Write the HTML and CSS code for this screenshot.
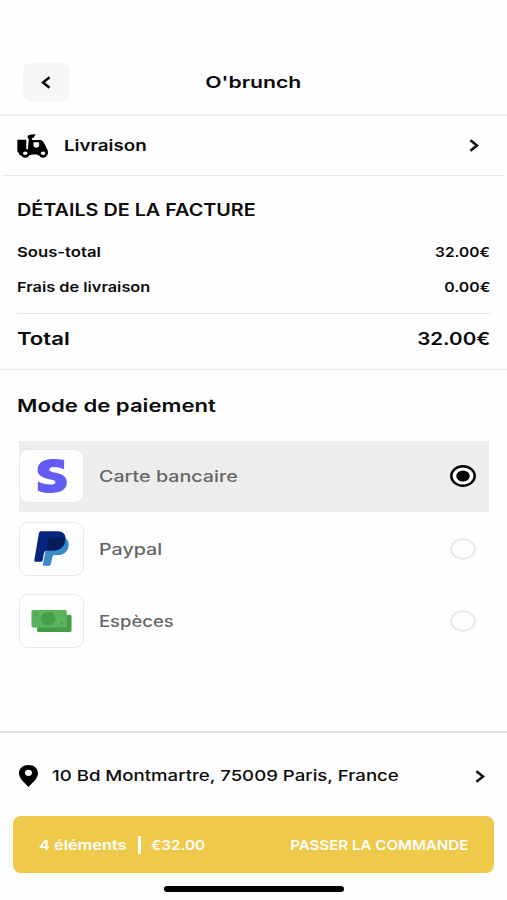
FILE: index.html
```html
<!DOCTYPE html>
<html lang="fr">
<head>
<meta charset="utf-8">
<title>O'brunch</title>
<link rel="stylesheet" href="styles.css">
</head>
<body>
<main class="screen">
  <header class="header">
    <button class="back" aria-label="Retour">
      <svg class="chevron" viewBox="0 0 10 13"><path d="M8.6 1.2 2 6.5l6.6 5.3"/></svg>
    </button>
    <h1 class="title"><span class="wide w-title">O'brunch</span></h1>
  </header>

  <section class="delivery">
    <svg class="truck" viewBox="0 0 94 72">
      <path d="M1 17h27v36h5l2-34h3q-4-1-3-6-4-2-3-7 3-5 12-5l12-1q-1 7-7 11l-5 3 3 4h24q7 0 11 9l9 18q3 4 3 10 0 7-5 9H8q-2-7-7-12z"/>
      <path class="hole" d="M50 25h17v12q-4 4-9 4-7-1-8-6z"/>
      <circle cx="25" cy="58" r="13.5"/><ellipse class="hole" cx="25" cy="58" rx="6.5" ry="5.5"/>
      <circle cx="79" cy="58" r="13.5"/><ellipse class="hole" cx="79" cy="58" rx="6.5" ry="5.5"/>
      <path class="hole" d="M40 66l4-4h17l3 4v6H40z"/>
    </svg>
    <span class="delivery-name"><span class="wide w-delivery">Livraison</span></span>
    <svg class="chevron" viewBox="0 0 10 13"><path d="M1.4 1.2 8 6.5l-6.6 5.3"/></svg>
  </section>

  <section class="bill">
    <h2 class="bill-title"><span class="wide w-bill">DÉTAILS DE LA FACTURE</span></h2>
    <div class="line"><span class="wide w-sub">Sous-total</span><span class="wide end w-sub-price">32.00€</span></div>
    <div class="line"><span class="wide w-fee">Frais de livraison</span><span class="wide end w-fee-price">0.00€</span></div>
    <div class="total"><span class="wide w-total">Total</span><span class="wide end w-total-price">32.00€</span></div>
  </section>

  <section class="payment">
    <h2 class="payment-title"><span class="wide w-payment">Mode de paiement</span></h2>
    <div class="option selected">
      <span class="tile">
        <svg class="stripe" viewBox="0 0 88 101"><path fill="#635bf5" d="M80 3V31C69 26 60 24 50 24c-10 0-14 3-14 7 0 6 8 7 20 10 22 5 32 13 32 28 0 21-18 32-48 32-15 0-28-3-38-7V67c12 6 24 9 37 9 11 0 15-3 15-7 0-6-8-7-18-9C13 55 1 48 1 32 1 12 19 0 45 0c13 0 24 1 35 3z"/></svg>
      </span>
      <span class="option-name"><span class="wide w-card">Carte bancaire</span></span>
      <svg class="radio" viewBox="0 0 26 22"><ellipse cx="13" cy="11" rx="11.7" ry="9.7" fill="#fff" stroke="#000" stroke-width="2.5"/><ellipse cx="13" cy="11" rx="6.7" ry="5.6"/></svg>
    </div>
    <div class="option">
      <span class="tile">
        <svg class="paypal" viewBox="102 303 106 106">
          <path fill="#378bcd" d="M194 323c12 5 15 16 12 29-4 17-17 24-34 24h-9q-4 0-5 5l-5 23q-1 4-5 4h-16q-4 0-3-4l15-77z"/>
          <path fill="#06247c" d="M122 304h52c18 0 25 11 23 26-3 22-17 32-39 32h-18q-6 0-8 9l-4 21q-1 4-5 4h-17q-4 0-3-5l14-82q1-5 5-5z"/>
          <path fill="#071b5b" d="M146 330q1-6 7-6l41-1q4 3 2 12c-4 19-17 27-38 27h-18q-2 0-1-2z"/>
        </svg>
      </span>
      <span class="option-name"><span class="wide w-paypal">Paypal</span></span>
      <svg class="radio" viewBox="0 0 26 22"><ellipse cx="13" cy="11" rx="12" ry="9.8" fill="#fefefe" stroke="#e6e6e6" stroke-width="1.7"/></svg>
    </div>
    <div class="option">
      <span class="tile">
        <svg class="cash" viewBox="0 0 124 68">
          <rect x="17" y="15" width="107" height="53" rx="5" fill="#439c46"/>
          <rect width="109" height="54" rx="5" fill="#59b45b"/>
          <ellipse cx="52" cy="27" rx="23" ry="21" fill="#479f49"/>
          <path fill="#479f49" d="M10 9h9l-2 6-4 3h-3zM98 45H88l2-7 5-2h3z"/>
        </svg>
      </span>
      <span class="option-name"><span class="wide w-cash">Espèces</span></span>
      <svg class="radio" viewBox="0 0 26 22"><ellipse cx="13" cy="11" rx="12" ry="9.8" fill="#fefefe" stroke="#e6e6e6" stroke-width="1.7"/></svg>
    </div>
  </section>

  <footer class="footer">
    <div class="address">
      <svg class="pin" viewBox="0 0 19 22"><path fill-rule="evenodd" d="M9.5 0C4 0 0 3.5 0 8.2 0 13.5 6 18 9.5 22 13 18 19 13.5 19 8.2 19 3.5 15 0 9.5 0zm0 4.7a3.5 3.1 0 1 1 0 6.2 3.5 3.1 0 0 1 0-6.2z"/></svg>
      <span class="address-text"><span class="wide w-address">10 Bd Montmartre, 75009 Paris, France</span></span>
      <svg class="chevron" viewBox="0 0 10 13"><path d="M1.4 1.2 8 6.5l-6.6 5.3"/></svg>
    </div>
    <button class="order">
      <span class="count"><span class="wide w-count">4 éléments</span></span>
      <span class="divider"></span>
      <span class="wide w-amount">€32.00</span>
      <span class="wide end w-order">PASSER LA COMMANDE</span>
    </button>
    <div class="home-bar"></div>
  </footer>
</main>
</body>
</html>
```
FILE: styles.css
```css
* { box-sizing: border-box; }
body { margin: 0; background: #fefefe; color: #0b0b0b; font-family: Inter, sans-serif; font-weight: 600; }
h1, h2 { margin: 0; font-weight: 600; }
button { border: 0; padding: 0; font: inherit; color: inherit; }
svg { display: block; flex: none; }
.screen { width: 507px; height: 900px; display: flex; flex-direction: column; overflow: hidden; }

/* Extended lettering: each label is widened from its own edge */
.wide { display: inline-block; white-space: nowrap; transform: scaleX(var(--k)); transform-origin: left center; }
.wide.end { margin-left: auto; transform-origin: right center; }
.w-title { --k: 1.324; transform-origin: center; }
.w-delivery { --k: 1.25; }
.w-bill { --k: 1.163; }
.w-sub { --k: 1.235; }
.w-sub-price { --k: 1.145; }
.w-fee { --k: 1.21; }
.w-fee-price { --k: 1.17; }
.w-total { --k: 1.3; }
.w-total-price { --k: 1.213; }
.w-payment { --k: 1.265; }
.w-card { --k: 1.27; }
.w-paypal { --k: 1.27; }
.w-cash { --k: 1.19; }
.w-address { --k: 1.24; }
.w-count { --k: 1.209; }
.w-amount { --k: 1.13; }
.w-order { --k: 1.118; }

.chevron { width: 10px; height: 13px; fill: none; stroke: #0b0b0b; stroke-width: 2.5; }

.header { height: 116px; padding: 63px 23px 0; display: grid; grid-template-columns: 47px 1fr 47px; align-items: start; border-bottom: 2px solid #efefef; }
.back { height: 39px; padding-right: 2px; display: grid; place-items: center; background: #f6f6f6; border-radius: 8px; }
.title { font-size: 16px; line-height: 39px; text-align: center; }

.delivery { height: 60px; margin: 0 2px; padding: 0 26px 0 15px; display: flex; align-items: center; border-bottom: 1px solid #e6e6e6; }
.truck { width: 31px; height: 24px; fill: #000; }
.truck .hole { fill: #fefefe; }
.delivery-name { flex: 1; margin-left: 15.5px; padding-bottom: 1px; font-size: 15px; }

.bill { height: 194px; padding: 18px 17px 0; border-bottom: 1px solid #e9e9e9; }
.bill-title { font-size: 17px; line-height: 33px; margin-bottom: 8px; }
.line { height: 34px; display: flex; align-items: center; font-size: 13.5px; }
.line + .line { margin-top: .5px; }
.total { height: 50px; margin-top: 9.5px; display: flex; align-items: center; font-size: 17px; border-top: 1px solid #e6e6e6; }

.payment { flex: 1; padding: 19px 18px 0 19px; display: flex; flex-direction: column; gap: 2px; }
.payment-title { height: 50px; margin: 0 0 0 -2px; font-size: 17.5px; line-height: 33px; }
.option { height: 70.5px; padding-right: 13.5px; display: flex; align-items: center; font-weight: 500; font-size: 15.5px; color: #666; }
.option.selected { background: #ededed; }
.tile { width: 65px; height: 54px; display: grid; place-items: center; background: #fefefe; border: 1.5px solid #e9e9e9; border-radius: 9px; }
.option-name { flex: 1; margin-left: 15px; padding-top: 1px; }
.radio { width: 26px; height: 22px; }
.stripe { width: 30px; height: 34px; }
.paypal { width: 35px; height: 35px; }
.cash { width: 41px; height: 22px; }

.footer { height: 169px; border-top: 2px solid #e3e3e3; }
.address { height: 83px; padding: 3px 22px 0 19px; display: flex; align-items: center; font-weight: 500; font-size: 15px; }
.pin { width: 19px; height: 22px; }
.address-text { flex: 1; margin-left: 13.5px; padding-bottom: 1px; }
.order { width: 481px; height: 57px; margin-left: 13px; padding: 0 26px; display: flex; align-items: center; background: #efc94a; color: #fff; border-radius: 8px; font-size: 13.5px; }
.count { width: 99px; text-align: left; }
.divider { width: 2.5px; height: 18px; margin-right: 10.5px; background: #fff; }
.home-bar { width: 180px; height: 5.5px; margin: 13px auto 0 164px; background: #000; border-radius: 3px; }
```
